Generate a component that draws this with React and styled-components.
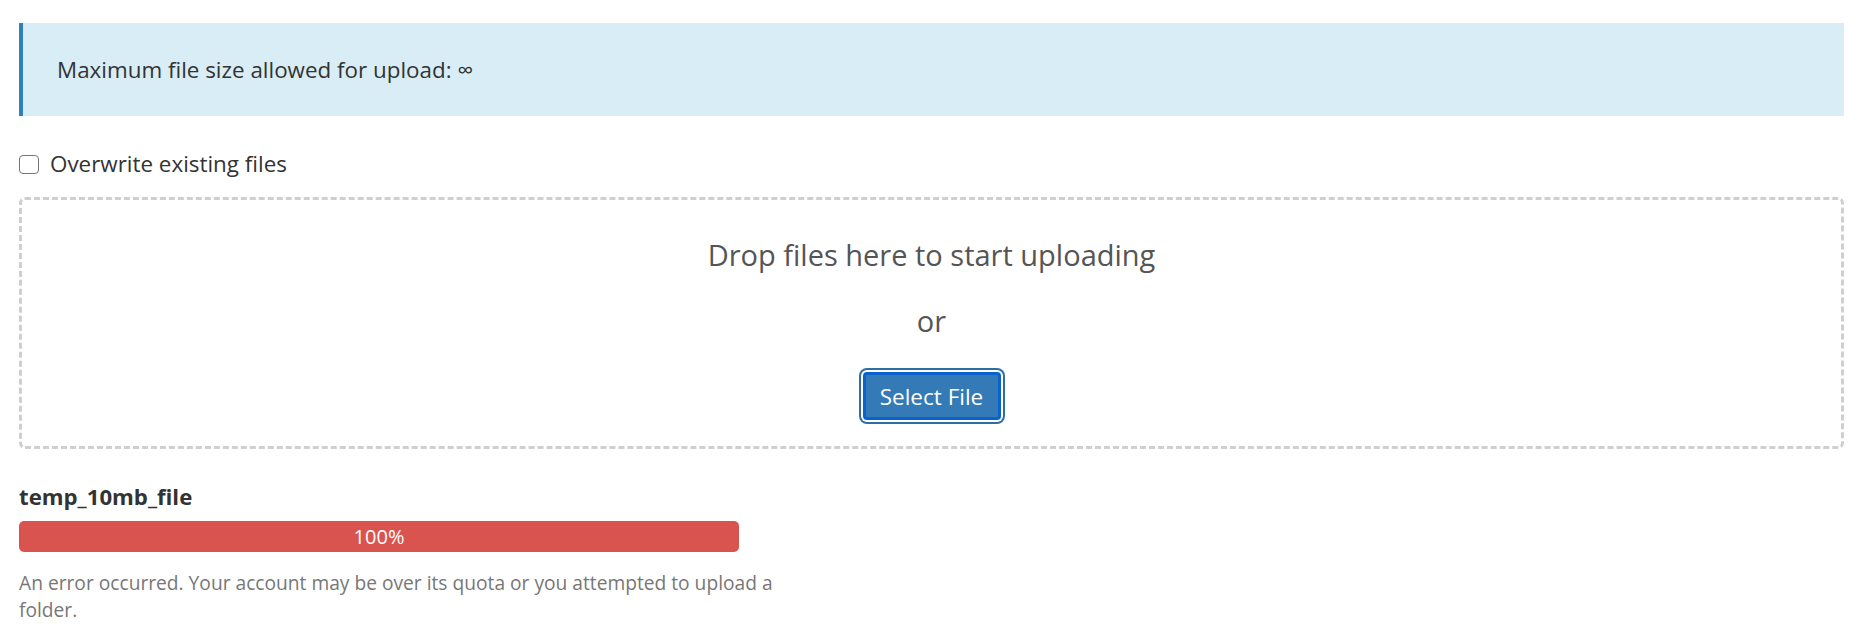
import styled, { createGlobalStyle } from 'styled-components';

const GlobalStyle = createGlobalStyle`
  body {
    margin: 0;
    background: #fff;
    font-family: "Open Sans", "Liberation Sans", sans-serif;
    color: #333;
  }
`;

export default function App() {
  return (
    <>
      <GlobalStyle />
      <Page>
        <Alert>Maximum file size allowed for upload: ∞</Alert>
        <CheckRow>
          <Check type="checkbox" />
          <span>Overwrite existing files</span>
        </CheckRow>
        <DropZone>
          <DropText>Drop files here to start uploading</DropText>
          <Or>or</Or>
          <SelectButton>Select File</SelectButton>
        </DropZone>
        <FileItem>
          <FileName>temp_10mb_file</FileName>
          <Progress>
            <Bar style={{ width: '100%' }}>100%</Bar>
          </Progress>
          <ErrorText>
            An error occurred. Your account may be over its quota or you attempted to upload a folder.
          </ErrorText>
        </FileItem>
      </Page>
    </>
  );
}

const Page = styled.div`
  padding: 23px 13px 0 19px;
`;

const Alert = styled.div`
  height: 93px;
  box-sizing: border-box;
  display: flex;
  align-items: center;
  padding-left: 34px;
  background: #d9edf7;
  border-left: 4px solid #2d82be;
  font-size: 22.4px;
  color: #333;
`;

const CheckRow = styled.label`
  display: flex;
  align-items: center;
  gap: 11px;
  margin-top: 37px;
  height: 22px;
  line-height: 22px;
  font-size: 22.4px;
  color: #333;
`;

const Check = styled.input`
  appearance: none;
  margin: 0;
  width: 20px;
  height: 19px;
  box-sizing: border-box;
  border: 1.5px solid #767676;
  border-radius: 4px;
  background: #fff;
`;

const DropZone = styled.div`
  margin-top: 22px;
  height: 252px;
  box-sizing: border-box;
  border: 3px dashed #cfcfcf;
  border-radius: 6px;
  display: flex;
  flex-direction: column;
  align-items: center;
  padding-top: 35px;
`;

const DropText = styled.div`
  font-size: 29px;
  line-height: 40px;
  color: #555;
`;

const Or = styled.div`
  margin-top: 26px;
  font-size: 29px;
  line-height: 40px;
  color: #555;
`;

const SelectButton = styled.button`
  margin-top: 31px;
  width: 138px;
  height: 48px;
  box-sizing: border-box;
  background: #337ab7;
  color: #fff;
  border: 3px solid #0a62cf;
  border-radius: 4px;
  box-shadow: 0 0 0 2px #fff, 0 0 0 4px #2f6ea5;
  font-family: "Open Sans", "Liberation Sans", sans-serif;
  font-size: 22.5px;
  padding: 0;
`;

const FileItem = styled.div`
  width: 780px;
  margin-top: 35px;
`;

const FileName = styled.div`
  font-weight: 700;
  font-size: 22.2px;
  line-height: 26px;
  color: #333;
`;

const Progress = styled.div`
  margin-top: 11px;
  width: 720px;
  height: 31px;
  border-radius: 5px;
  background: #f5f5f5;
  overflow: hidden;
`;

const Bar = styled.div`
  height: 100%;
  background: #d9534f;
  color: #fff;
  font-size: 20px;
  line-height: 31px;
  text-align: center;
`;

const ErrorText = styled.div`
  margin-top: 17px;
  font-size: 19.2px;
  line-height: 27px;
  color: #777;
`;
